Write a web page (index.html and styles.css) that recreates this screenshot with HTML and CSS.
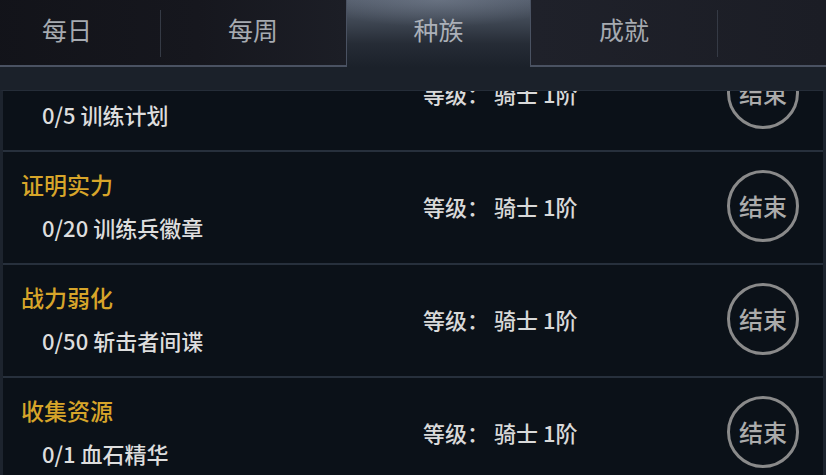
FILE: index.html
```html
<!DOCTYPE html>
<html lang="zh-CN">
<head>
<meta charset="utf-8">
<title>任务</title>
<link rel="stylesheet" href="styles.css">
</head>
<body>
<div class="app">
  <nav class="tabs">
    <div class="tab-group tab-group-left">
      <div class="tab">每日</div>
      <div class="tab tab-sep">每周</div>
    </div>
    <div class="tab tab-active">种族</div>
    <div class="tab-group tab-group-right">
      <div class="tab">成就</div>
      <div class="tab tab-sep tab-empty"></div>
    </div>
  </nav>
  <div class="strip"></div>
  <div class="list">
    <div class="list-scroll">
      <div class="row">
        <div class="quest">
          <div class="quest-title">磨练技艺</div>
          <div class="quest-progress">0/5 训练计划</div>
        </div>
        <div class="level">等级： 骑士 1阶</div>
        <div class="btn-end">结束</div>
      </div>
      <div class="row">
        <div class="quest">
          <div class="quest-title">证明实力</div>
          <div class="quest-progress">0/20 训练兵徽章</div>
        </div>
        <div class="level">等级： 骑士 1阶</div>
        <div class="btn-end">结束</div>
      </div>
      <div class="row">
        <div class="quest">
          <div class="quest-title">战力弱化</div>
          <div class="quest-progress">0/50 斩击者间谍</div>
        </div>
        <div class="level">等级： 骑士 1阶</div>
        <div class="btn-end">结束</div>
      </div>
      <div class="row">
        <div class="quest">
          <div class="quest-title">收集资源</div>
          <div class="quest-progress">0/1 血石精华</div>
        </div>
        <div class="level">等级： 骑士 1阶</div>
        <div class="btn-end">结束</div>
      </div>
    </div>
  </div>
</div>
</body>
</html>
```
FILE: styles.css
```css
* { box-sizing: border-box; }
html, body {
  margin: 0;
  padding: 0;
  background: #0b1118;
}
body {
  width: 826px;
  height: 475px;
  overflow: hidden;
  font-family: "Noto Sans CJK SC", "Noto Sans", sans-serif;
}
.app {
  width: 826px;
  height: 475px;
  display: flex;
  flex-direction: column;
  overflow: hidden;
}
.tabs {
  height: 67px;
  display: flex;
  flex: none;
  background: #1b212a;
}
.tab-group {
  display: flex;
  flex: none;
  height: 67px;
  border-bottom: 2px solid #4a5262;
}
.tab-group-left {
  margin-left: -26px;
  border-right: 1px solid #4a5262;
  background: linear-gradient(to right, #121319 0%, #16171e 60%, #1c1e26 100%);
}
.tab-group-right {
  flex: 1 0 auto;
  border-left: 1px solid #4a5262;
  background: linear-gradient(to right, #1f212a 0%, #1b1d25 100%);
}
.tab {
  flex: none;
  width: 186px;
  height: 65px;
  display: flex;
  align-items: center;
  justify-content: center;
  font-size: 25px;
  color: #a6aab0;
  position: relative;
  padding-bottom: 8px;
}
.tab-sep::before {
  content: "";
  position: absolute;
  left: 0;
  top: 10px;
  bottom: 8px;
  width: 1px;
  background: #353a45;
}
.tab-empty { flex: 1 0 auto; width: auto; }
.tab-active {
  width: 183px;
  height: 67px;
  padding-bottom: 10px;
  color: #abb0b8;
  background:
    radial-gradient(ellipse 70% 40% at 50% 0%, rgba(120,130,146,0.55), rgba(120,130,146,0) 100%),
    linear-gradient(to bottom, #535c6b 0%, #3c4450 35%, #262c36 65%, #1b212a 100%);
}
.strip {
  height: 23px;
  flex: none;
  background: #1b212a;
}
.list {
  flex: 1;
  overflow: hidden;
  border-top: 1px solid #252d38;
  border-left: 3px solid #1d242e;
  border-right: 3px solid #1d242e;
  background: #0b1118;
}
.list-scroll {
  margin-top: -52px;
}
.row {
  height: 113px;
  border-bottom: 2px solid #27303c;
  display: grid;
  grid-template-columns: 402px 1fr auto;
  align-items: center;
  padding: 0 24px 4px 18px;
}
.quest {
  display: flex;
  flex-direction: column;
  gap: 13px;
}
.quest-title {
  font-size: 23px;
  line-height: 30px;
  color: #d7a52a;
  font-weight: 500;
}
.quest-progress {
  font-size: 22px;
  line-height: 30px;
  color: #dddddd;
  padding-left: 21px;
  font-weight: 500;
}
.level {
  font-size: 22px;
  line-height: 30px;
  color: #d9d9d9;
  font-weight: 500;
}
.btn-end {
  width: 72px;
  height: 72px;
  border-radius: 50%;
  border: 3px solid #8a8a8a;
  display: flex;
  align-items: center;
  justify-content: center;
  font-size: 24px;
  color: #ababab;
  font-weight: 500;
}
```
